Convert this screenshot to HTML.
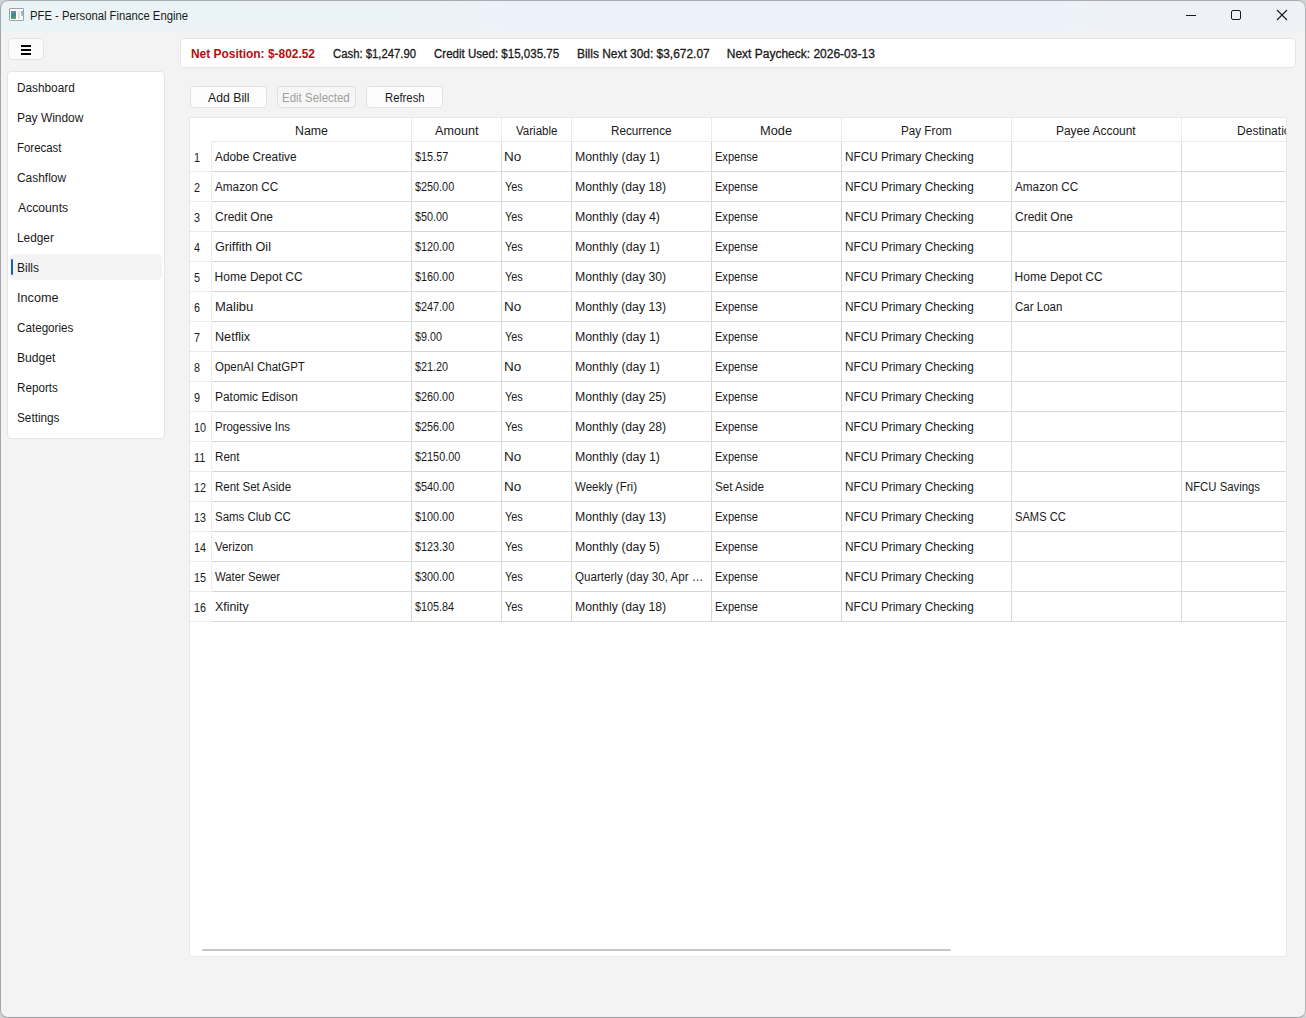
<!DOCTYPE html>
<html><head><meta charset="utf-8">
<style>
*{box-sizing:border-box;margin:0;padding:0}
html,body{width:1306px;height:1018px;overflow:hidden;background:#cfd1d4}
body{font-family:"Liberation Sans",sans-serif;color:#1a1a1a;position:relative}
.win{position:absolute;left:0;top:0;width:1306px;height:1018px;border-radius:8px;overflow:hidden;background:#f3f3f3}
.wb{position:absolute;left:0;top:0;width:1306px;height:1018px;border:1px solid #a9abae;border-color:#a9abae #b3b5b8 #9c9ea1 #a4a6a9;border-radius:8px}
.tb{position:absolute;left:0;top:0;width:1306px;height:31px;background:linear-gradient(90deg,#eaf3f5 0px,#ebf3f6 440px,#edf2fa 510px,#edf2fa 1060px,#eef2f6 1120px)}
.tx{position:absolute;white-space:nowrap;transform-origin:0 0;font-size:12px;line-height:20px}
.bx{position:absolute}
</style></head><body>
<div class="win">
<div class="tb"></div>

<div class="bx" style="left:9px;top:8px;width:15px;height:13px;border:1px solid #9da1a7;border-radius:1px;background:#fbfbfb"></div>
<div class="bx" style="left:11px;top:11px;width:5px;height:8px;background:linear-gradient(160deg,#6f93c4,#3f8a8a 50%,#5aae6a)"></div>
<div class="bx" style="left:18px;top:11px;width:2px;height:8px;background:#e2e2e2"></div>
<div class="bx" style="left:21px;top:11px;width:2px;height:5px;background:linear-gradient(180deg,#8fb0d8,#a6d6a0)"></div>

<div class="bx" style="left:1186px;top:15px;width:10px;height:1px;background:#1a1a1a"></div>
<div class="bx" style="left:1231px;top:10px;width:10px;height:10px;border:1px solid #1a1a1a;border-radius:2px"></div>
<svg class="bx" style="left:1276px;top:9px" width="12" height="12" viewBox="0 0 12 12"><path d="M1 1 L11 11 M11 1 L1 11" stroke="#1a1a1a" stroke-width="1.1" fill="none"/></svg>

<div class="bx" style="left:8px;top:38px;width:36px;height:22px;background:#fbfbfb;border:1px solid #e5e5e5;border-radius:5px"></div>
<div class="bx" style="left:21px;top:45px;width:10px;height:2px;background:#000"></div>
<div class="bx" style="left:21px;top:49px;width:10px;height:2px;background:#000"></div>
<div class="bx" style="left:21px;top:53px;width:10px;height:2px;background:#000"></div>
<div class="bx" style="left:180px;top:38px;width:1116px;height:30px;background:#fff;border:1px solid #e5e5e5;border-radius:4px"></div>
<div class="bx" style="left:7px;top:71px;width:158px;height:368px;background:#fff;border:1px solid #e5e5e5;border-radius:4px"></div>
<div class="bx" style="left:10px;top:254px;width:152px;height:26px;background:#f3f3f3;border-radius:5px"></div>
<div class="bx" style="left:11px;top:259px;width:2px;height:16px;background:#0f62c8;border-radius:2px"></div>
<div class="bx" style="left:190px;top:86px;width:77px;height:22px;background:#fdfdfd;border:1px solid #e2e2e2;border-radius:4px"></div>
<div class="bx" style="left:277px;top:86px;width:79px;height:22px;background:#f6f6f6;border:1px solid #e0e0e0;border-radius:4px"></div>
<div class="bx" style="left:366px;top:86px;width:77px;height:22px;background:#fdfdfd;border:1px solid #e2e2e2;border-radius:4px"></div>
<div class="bx" style="left:189px;top:117px;width:1098px;height:840px;background:#fff;border:1px solid #e8e8e8;border-radius:2px"></div>

<div class="bx" style="left:190px;top:118px;width:1096px;height:838px;overflow:hidden">
<div class="bx" style="left:221px;top:0px;width:1px;height:23px;background:#ececec"></div>
<div class="bx" style="left:311px;top:0px;width:1px;height:23px;background:#ececec"></div>
<div class="bx" style="left:381px;top:0px;width:1px;height:23px;background:#ececec"></div>
<div class="bx" style="left:521px;top:0px;width:1px;height:23px;background:#ececec"></div>
<div class="bx" style="left:651px;top:0px;width:1px;height:23px;background:#ececec"></div>
<div class="bx" style="left:821px;top:0px;width:1px;height:23px;background:#ececec"></div>
<div class="bx" style="left:991px;top:0px;width:1px;height:23px;background:#ececec"></div>
<div class="bx" style="left:1161px;top:0px;width:1px;height:23px;background:#ececec"></div>
<div class="bx" style="left:22px;top:23px;width:1200px;height:1px;background:#ececec"></div>
<div class="bx" style="left:0px;top:53px;width:21px;height:1px;background:#ececec"></div>
<div class="bx" style="left:21px;top:24px;width:1px;height:29px;background:#ececec"></div>
<div class="bx" style="left:22px;top:53px;width:1200px;height:1px;background:#d9d9d9"></div>
<div class="bx" style="left:0px;top:83px;width:21px;height:1px;background:#ececec"></div>
<div class="bx" style="left:21px;top:54px;width:1px;height:29px;background:#ececec"></div>
<div class="bx" style="left:22px;top:83px;width:1200px;height:1px;background:#d9d9d9"></div>
<div class="bx" style="left:0px;top:113px;width:21px;height:1px;background:#ececec"></div>
<div class="bx" style="left:21px;top:84px;width:1px;height:29px;background:#ececec"></div>
<div class="bx" style="left:22px;top:113px;width:1200px;height:1px;background:#d9d9d9"></div>
<div class="bx" style="left:0px;top:143px;width:21px;height:1px;background:#ececec"></div>
<div class="bx" style="left:21px;top:114px;width:1px;height:29px;background:#ececec"></div>
<div class="bx" style="left:22px;top:143px;width:1200px;height:1px;background:#d9d9d9"></div>
<div class="bx" style="left:0px;top:173px;width:21px;height:1px;background:#ececec"></div>
<div class="bx" style="left:21px;top:144px;width:1px;height:29px;background:#ececec"></div>
<div class="bx" style="left:22px;top:173px;width:1200px;height:1px;background:#d9d9d9"></div>
<div class="bx" style="left:0px;top:203px;width:21px;height:1px;background:#ececec"></div>
<div class="bx" style="left:21px;top:174px;width:1px;height:29px;background:#ececec"></div>
<div class="bx" style="left:22px;top:203px;width:1200px;height:1px;background:#d9d9d9"></div>
<div class="bx" style="left:0px;top:233px;width:21px;height:1px;background:#ececec"></div>
<div class="bx" style="left:21px;top:204px;width:1px;height:29px;background:#ececec"></div>
<div class="bx" style="left:22px;top:233px;width:1200px;height:1px;background:#d9d9d9"></div>
<div class="bx" style="left:0px;top:263px;width:21px;height:1px;background:#ececec"></div>
<div class="bx" style="left:21px;top:234px;width:1px;height:29px;background:#ececec"></div>
<div class="bx" style="left:22px;top:263px;width:1200px;height:1px;background:#d9d9d9"></div>
<div class="bx" style="left:0px;top:293px;width:21px;height:1px;background:#ececec"></div>
<div class="bx" style="left:21px;top:264px;width:1px;height:29px;background:#ececec"></div>
<div class="bx" style="left:22px;top:293px;width:1200px;height:1px;background:#d9d9d9"></div>
<div class="bx" style="left:0px;top:323px;width:21px;height:1px;background:#ececec"></div>
<div class="bx" style="left:21px;top:294px;width:1px;height:29px;background:#ececec"></div>
<div class="bx" style="left:22px;top:323px;width:1200px;height:1px;background:#d9d9d9"></div>
<div class="bx" style="left:0px;top:353px;width:21px;height:1px;background:#ececec"></div>
<div class="bx" style="left:21px;top:324px;width:1px;height:29px;background:#ececec"></div>
<div class="bx" style="left:22px;top:353px;width:1200px;height:1px;background:#d9d9d9"></div>
<div class="bx" style="left:0px;top:383px;width:21px;height:1px;background:#ececec"></div>
<div class="bx" style="left:21px;top:354px;width:1px;height:29px;background:#ececec"></div>
<div class="bx" style="left:22px;top:383px;width:1200px;height:1px;background:#d9d9d9"></div>
<div class="bx" style="left:0px;top:413px;width:21px;height:1px;background:#ececec"></div>
<div class="bx" style="left:21px;top:384px;width:1px;height:29px;background:#ececec"></div>
<div class="bx" style="left:22px;top:413px;width:1200px;height:1px;background:#d9d9d9"></div>
<div class="bx" style="left:0px;top:443px;width:21px;height:1px;background:#ececec"></div>
<div class="bx" style="left:21px;top:414px;width:1px;height:29px;background:#ececec"></div>
<div class="bx" style="left:22px;top:443px;width:1200px;height:1px;background:#d9d9d9"></div>
<div class="bx" style="left:0px;top:473px;width:21px;height:1px;background:#ececec"></div>
<div class="bx" style="left:21px;top:444px;width:1px;height:29px;background:#ececec"></div>
<div class="bx" style="left:22px;top:473px;width:1200px;height:1px;background:#d9d9d9"></div>
<div class="bx" style="left:0px;top:503px;width:21px;height:1px;background:#ececec"></div>
<div class="bx" style="left:22px;top:503px;width:1200px;height:1px;background:#d9d9d9"></div>
<div class="bx" style="left:221px;top:24px;width:1px;height:479px;background:#d9d9d9"></div>
<div class="bx" style="left:311px;top:24px;width:1px;height:479px;background:#d9d9d9"></div>
<div class="bx" style="left:381px;top:24px;width:1px;height:479px;background:#d9d9d9"></div>
<div class="bx" style="left:521px;top:24px;width:1px;height:479px;background:#d9d9d9"></div>
<div class="bx" style="left:651px;top:24px;width:1px;height:479px;background:#d9d9d9"></div>
<div class="bx" style="left:821px;top:24px;width:1px;height:479px;background:#d9d9d9"></div>
<div class="bx" style="left:991px;top:24px;width:1px;height:479px;background:#d9d9d9"></div>
<div class="bx" style="left:1161px;top:24px;width:1px;height:479px;background:#d9d9d9"></div>
<div class="bx" style="left:12px;top:831px;width:749px;height:2px;background:#c6c6c6;border-radius:1px"></div>
<div class="tx" style="left:104.97px;top:3px;transform:scaleX(1.0295);">Name</div>
<div class="tx" style="left:244.97px;top:3px;transform:scaleX(1.0505);">Amount</div>
<div class="tx" style="left:326.13px;top:3px;transform:scaleX(0.9624);">Variable</div>
<div class="tx" style="left:421.22px;top:3px;transform:scaleX(0.9752);">Recurrence</div>
<div class="tx" style="left:570.38px;top:3px;transform:scaleX(1.0702);">Mode</div>
<div class="tx" style="left:711.28px;top:3px;transform:scaleX(0.9731);">Pay From</div>
<div class="tx" style="left:866.41px;top:3px;transform:scaleX(0.9949);">Payee Account</div>
<div class="tx" style="left:1046.50px;top:3px;transform:scaleX(1.0026);">Destination</div>
<div class="tx" style="left:3.81px;top:30px;transform:scaleX(0.9000);">1</div>
<div class="tx" style="left:25.48px;top:29px;transform:scaleX(0.9866);">Adobe Creative</div>
<div class="tx" style="left:225.49px;top:29px;transform:scaleX(0.9056);">$15.57</div>
<div class="tx" style="left:314.48px;top:29px;transform:scaleX(1.1243);">No</div>
<div class="tx" style="left:384.57px;top:29px;transform:scaleX(1.0272);">Monthly (day 1)</div>
<div class="tx" style="left:524.68px;top:29px;transform:scaleX(0.9197);">Expense</div>
<div class="tx" style="left:654.62px;top:29px;transform:scaleX(0.9797);">NFCU Primary Checking</div>
<div class="tx" style="left:4.04px;top:60px;transform:scaleX(0.9000);">2</div>
<div class="tx" style="left:25.48px;top:59px;transform:scaleX(0.9778);">Amazon CC</div>
<div class="tx" style="left:225.49px;top:59px;transform:scaleX(0.9029);">$250.00</div>
<div class="tx" style="left:315.26px;top:59px;transform:scaleX(0.9067);">Yes</div>
<div class="tx" style="left:384.58px;top:59px;transform:scaleX(1.0191);">Monthly (day 18)</div>
<div class="tx" style="left:524.68px;top:59px;transform:scaleX(0.9197);">Expense</div>
<div class="tx" style="left:654.62px;top:59px;transform:scaleX(0.9797);">NFCU Primary Checking</div>
<div class="tx" style="left:825.48px;top:59px;transform:scaleX(0.9778);">Amazon CC</div>
<div class="tx" style="left:4.15px;top:90px;transform:scaleX(0.9000);">3</div>
<div class="tx" style="left:24.98px;top:89px;">Credit One</div>
<div class="tx" style="left:225.49px;top:89px;transform:scaleX(0.9024);">$50.00</div>
<div class="tx" style="left:315.26px;top:89px;transform:scaleX(0.9067);">Yes</div>
<div class="tx" style="left:384.57px;top:89px;transform:scaleX(1.0272);">Monthly (day 4)</div>
<div class="tx" style="left:524.68px;top:89px;transform:scaleX(0.9197);">Expense</div>
<div class="tx" style="left:654.62px;top:89px;transform:scaleX(0.9797);">NFCU Primary Checking</div>
<div class="tx" style="left:824.98px;top:89px;">Credit One</div>
<div class="tx" style="left:4.38px;top:120px;transform:scaleX(0.9000);">4</div>
<div class="tx" style="left:24.94px;top:119px;transform:scaleX(1.0531);">Griffith Oil</div>
<div class="tx" style="left:225.49px;top:119px;transform:scaleX(0.9029);">$120.00</div>
<div class="tx" style="left:315.26px;top:119px;transform:scaleX(0.9067);">Yes</div>
<div class="tx" style="left:384.57px;top:119px;transform:scaleX(1.0272);">Monthly (day 1)</div>
<div class="tx" style="left:524.68px;top:119px;transform:scaleX(0.9197);">Expense</div>
<div class="tx" style="left:654.62px;top:119px;transform:scaleX(0.9797);">NFCU Primary Checking</div>
<div class="tx" style="left:4.15px;top:150px;transform:scaleX(0.9000);">5</div>
<div class="tx" style="left:24.60px;top:149px;">Home Depot CC</div>
<div class="tx" style="left:225.49px;top:149px;transform:scaleX(0.9029);">$160.00</div>
<div class="tx" style="left:315.26px;top:149px;transform:scaleX(0.9067);">Yes</div>
<div class="tx" style="left:384.58px;top:149px;transform:scaleX(1.0191);">Monthly (day 30)</div>
<div class="tx" style="left:524.68px;top:149px;transform:scaleX(0.9197);">Expense</div>
<div class="tx" style="left:654.62px;top:149px;transform:scaleX(0.9797);">NFCU Primary Checking</div>
<div class="tx" style="left:824.60px;top:149px;">Home Depot CC</div>
<div class="tx" style="left:4.04px;top:180px;transform:scaleX(0.9000);">6</div>
<div class="tx" style="left:24.52px;top:179px;transform:scaleX(1.0836);">Malibu</div>
<div class="tx" style="left:225.49px;top:179px;transform:scaleX(0.9029);">$247.00</div>
<div class="tx" style="left:314.48px;top:179px;transform:scaleX(1.1243);">No</div>
<div class="tx" style="left:384.58px;top:179px;transform:scaleX(1.0191);">Monthly (day 13)</div>
<div class="tx" style="left:524.68px;top:179px;transform:scaleX(0.9197);">Expense</div>
<div class="tx" style="left:654.62px;top:179px;transform:scaleX(0.9797);">NFCU Primary Checking</div>
<div class="tx" style="left:825.00px;top:179px;transform:scaleX(0.9604);">Car Loan</div>
<div class="tx" style="left:4.04px;top:210px;transform:scaleX(0.9000);">7</div>
<div class="tx" style="left:24.55px;top:209px;transform:scaleX(1.0521);">Netflix</div>
<div class="tx" style="left:225.49px;top:209px;transform:scaleX(0.8987);">$9.00</div>
<div class="tx" style="left:315.26px;top:209px;transform:scaleX(0.9067);">Yes</div>
<div class="tx" style="left:384.57px;top:209px;transform:scaleX(1.0272);">Monthly (day 1)</div>
<div class="tx" style="left:524.68px;top:209px;transform:scaleX(0.9197);">Expense</div>
<div class="tx" style="left:654.62px;top:209px;transform:scaleX(0.9797);">NFCU Primary Checking</div>
<div class="tx" style="left:4.15px;top:240px;transform:scaleX(0.9000);">8</div>
<div class="tx" style="left:25.00px;top:239px;transform:scaleX(0.9546);">OpenAI ChatGPT</div>
<div class="tx" style="left:225.49px;top:239px;transform:scaleX(0.9024);">$21.20</div>
<div class="tx" style="left:314.48px;top:239px;transform:scaleX(1.1243);">No</div>
<div class="tx" style="left:384.57px;top:239px;transform:scaleX(1.0272);">Monthly (day 1)</div>
<div class="tx" style="left:524.68px;top:239px;transform:scaleX(0.9197);">Expense</div>
<div class="tx" style="left:654.62px;top:239px;transform:scaleX(0.9797);">NFCU Primary Checking</div>
<div class="tx" style="left:4.04px;top:270px;transform:scaleX(0.9000);">9</div>
<div class="tx" style="left:24.61px;top:269px;transform:scaleX(0.9936);">Patomic Edison</div>
<div class="tx" style="left:225.49px;top:269px;transform:scaleX(0.9029);">$260.00</div>
<div class="tx" style="left:315.26px;top:269px;transform:scaleX(0.9067);">Yes</div>
<div class="tx" style="left:384.58px;top:269px;transform:scaleX(1.0191);">Monthly (day 25)</div>
<div class="tx" style="left:524.68px;top:269px;transform:scaleX(0.9197);">Expense</div>
<div class="tx" style="left:654.62px;top:269px;transform:scaleX(0.9797);">NFCU Primary Checking</div>
<div class="tx" style="left:3.81px;top:300px;transform:scaleX(0.9000);">10</div>
<div class="tx" style="left:24.65px;top:299px;transform:scaleX(0.9528);">Progessive Ins</div>
<div class="tx" style="left:225.49px;top:299px;transform:scaleX(0.9029);">$256.00</div>
<div class="tx" style="left:315.26px;top:299px;transform:scaleX(0.9067);">Yes</div>
<div class="tx" style="left:384.58px;top:299px;transform:scaleX(1.0191);">Monthly (day 28)</div>
<div class="tx" style="left:524.68px;top:299px;transform:scaleX(0.9197);">Expense</div>
<div class="tx" style="left:654.62px;top:299px;transform:scaleX(0.9797);">NFCU Primary Checking</div>
<div class="tx" style="left:3.81px;top:330px;transform:scaleX(0.9000);">11</div>
<div class="tx" style="left:24.63px;top:329px;transform:scaleX(0.9691);">Rent</div>
<div class="tx" style="left:225.49px;top:329px;transform:scaleX(0.9051);">$2150.00</div>
<div class="tx" style="left:314.48px;top:329px;transform:scaleX(1.1243);">No</div>
<div class="tx" style="left:384.57px;top:329px;transform:scaleX(1.0272);">Monthly (day 1)</div>
<div class="tx" style="left:524.68px;top:329px;transform:scaleX(0.9197);">Expense</div>
<div class="tx" style="left:654.62px;top:329px;transform:scaleX(0.9797);">NFCU Primary Checking</div>
<div class="tx" style="left:3.81px;top:360px;transform:scaleX(0.9000);">12</div>
<div class="tx" style="left:24.64px;top:359px;transform:scaleX(0.9592);">Rent Set Aside</div>
<div class="tx" style="left:225.49px;top:359px;transform:scaleX(0.9029);">$540.00</div>
<div class="tx" style="left:314.48px;top:359px;transform:scaleX(1.1243);">No</div>
<div class="tx" style="left:385.48px;top:359px;transform:scaleX(0.9622);">Weekly (Fri)</div>
<div class="tx" style="left:525.00px;top:359px;transform:scaleX(0.9657);">Set Aside</div>
<div class="tx" style="left:654.62px;top:359px;transform:scaleX(0.9797);">NFCU Primary Checking</div>
<div class="tx" style="left:994.65px;top:359px;transform:scaleX(0.9451);">NFCU Savings</div>
<div class="tx" style="left:3.81px;top:390px;transform:scaleX(0.9000);">13</div>
<div class="tx" style="left:25.00px;top:389px;transform:scaleX(0.9546);">Sams Club CC</div>
<div class="tx" style="left:225.49px;top:389px;transform:scaleX(0.9029);">$100.00</div>
<div class="tx" style="left:315.26px;top:389px;transform:scaleX(0.9067);">Yes</div>
<div class="tx" style="left:384.58px;top:389px;transform:scaleX(1.0191);">Monthly (day 13)</div>
<div class="tx" style="left:524.68px;top:389px;transform:scaleX(0.9197);">Expense</div>
<div class="tx" style="left:654.62px;top:389px;transform:scaleX(0.9797);">NFCU Primary Checking</div>
<div class="tx" style="left:825.02px;top:389px;transform:scaleX(0.9290);">SAMS CC</div>
<div class="tx" style="left:3.81px;top:420px;transform:scaleX(0.9000);">14</div>
<div class="tx" style="left:25.48px;top:419px;transform:scaleX(0.9534);">Verizon</div>
<div class="tx" style="left:225.49px;top:419px;transform:scaleX(0.9029);">$123.30</div>
<div class="tx" style="left:315.26px;top:419px;transform:scaleX(0.9067);">Yes</div>
<div class="tx" style="left:384.57px;top:419px;transform:scaleX(1.0272);">Monthly (day 5)</div>
<div class="tx" style="left:524.68px;top:419px;transform:scaleX(0.9197);">Expense</div>
<div class="tx" style="left:654.62px;top:419px;transform:scaleX(0.9797);">NFCU Primary Checking</div>
<div class="tx" style="left:3.81px;top:450px;transform:scaleX(0.9000);">15</div>
<div class="tx" style="left:25.48px;top:449px;transform:scaleX(0.9443);">Water Sewer</div>
<div class="tx" style="left:225.49px;top:449px;transform:scaleX(0.9029);">$300.00</div>
<div class="tx" style="left:315.26px;top:449px;transform:scaleX(0.9067);">Yes</div>
<div class="tx" style="left:385.00px;top:449px;transform:scaleX(0.9678);">Quarterly (day 30, Apr …</div>
<div class="tx" style="left:524.68px;top:449px;transform:scaleX(0.9197);">Expense</div>
<div class="tx" style="left:654.62px;top:449px;transform:scaleX(0.9797);">NFCU Primary Checking</div>
<div class="tx" style="left:3.81px;top:480px;transform:scaleX(0.9000);">16</div>
<div class="tx" style="left:25.21px;top:479px;transform:scaleX(1.0326);">Xfinity</div>
<div class="tx" style="left:225.49px;top:479px;transform:scaleX(0.9003);">$105.84</div>
<div class="tx" style="left:315.26px;top:479px;transform:scaleX(0.9067);">Yes</div>
<div class="tx" style="left:384.58px;top:479px;transform:scaleX(1.0191);">Monthly (day 18)</div>
<div class="tx" style="left:524.68px;top:479px;transform:scaleX(0.9197);">Expense</div>
<div class="tx" style="left:654.62px;top:479px;transform:scaleX(0.9797);">NFCU Primary Checking</div>
</div>
<div class="tx" style="left:29.66px;top:6px;transform:scaleX(0.9399);">PFE - Personal Finance Engine</div>
<div class="tx" style="left:190.55px;top:44px;font-weight:bold;color:#b40f0f;transform:scaleX(0.9943);">Net Position: $-802.52</div>
<div class="tx" style="left:332.83px;top:44px;-webkit-text-stroke:0.3px currentColor;transform:scaleX(0.9433);">Cash: $1,247.90</div>
<div class="tx" style="left:433.72px;top:44px;-webkit-text-stroke:0.3px currentColor;transform:scaleX(0.9617);">Credit Used: $15,035.75</div>
<div class="tx" style="left:576.53px;top:44px;-webkit-text-stroke:0.3px currentColor;transform:scaleX(0.9945);">Bills Next 30d: $3,672.07</div>
<div class="tx" style="left:726.73px;top:44px;-webkit-text-stroke:0.3px currentColor;">Next Paycheck: 2026-03-13</div>
<div class="tx" style="left:207.67px;top:88px;transform:scaleX(1.0214);">Add Bill</div>
<div class="tx" style="left:282.44px;top:88px;color:#a0a0a0;transform:scaleX(0.9583);">Edit Selected</div>
<div class="tx" style="left:384.56px;top:88px;transform:scaleX(0.9416);">Refresh</div>
<div class="tx" style="left:17.02px;top:78px;transform:scaleX(0.9829);">Dashboard</div>
<div class="tx" style="left:17.01px;top:108px;transform:scaleX(0.9947);">Pay Window</div>
<div class="tx" style="left:17.05px;top:138px;transform:scaleX(0.9534);">Forecast</div>
<div class="tx" style="left:17.38px;top:168px;transform:scaleX(0.9949);">Cashflow</div>
<div class="tx" style="left:17.87px;top:198px;transform:scaleX(1.0154);">Accounts</div>
<div class="tx" style="left:17.01px;top:228px;transform:scaleX(0.9855);">Ledger</div>
<div class="tx" style="left:17.00px;top:258px;">Bills</div>
<div class="tx" style="left:16.81px;top:288px;transform:scaleX(1.0543);">Income</div>
<div class="tx" style="left:17.39px;top:318px;transform:scaleX(0.9719);">Categories</div>
<div class="tx" style="left:16.99px;top:348px;transform:scaleX(1.0115);">Budget</div>
<div class="tx" style="left:17.03px;top:378px;transform:scaleX(0.9723);">Reports</div>
<div class="tx" style="left:17.39px;top:408px;transform:scaleX(0.9799);">Settings</div>
</div><div class="wb"></div>
</body></html>
